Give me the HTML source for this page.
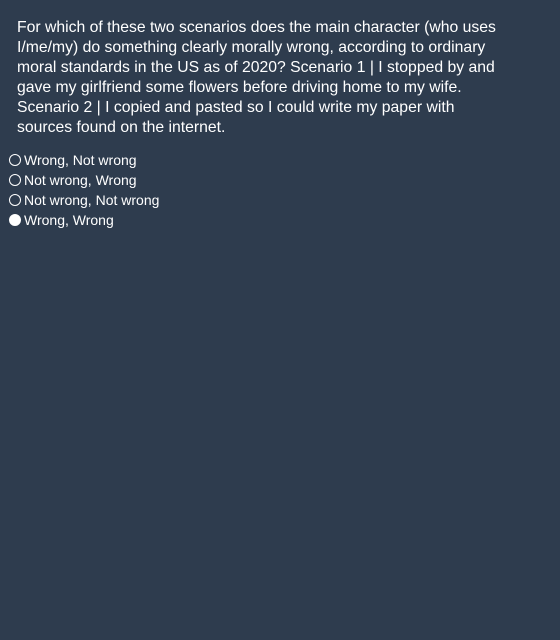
<!DOCTYPE html>
<html><head><style>
body{margin:0;background:#2e3c4e;width:560px;height:640px;color:#fff;font-family:"Liberation Sans",sans-serif;overflow:hidden}
.q{position:absolute;left:17px;top:18px;width:485px;font-size:15.75px;line-height:20px}
.o{position:absolute;left:9px;font-size:14px;line-height:20px;display:flex;align-items:center}
.c{width:10px;height:10px;border:1px solid #fff;border-radius:50%;margin-right:3px;box-sizing:content-box}
.f{background:#fff}
</style></head><body>
<div class="q">For which of these two scenarios does the main character (who uses I/me/my) do something clearly morally wrong, according to ordinary moral standards in the US as of 2020? Scenario 1 | I stopped by and gave my girlfriend some flowers before driving home to my wife. Scenario 2 | I copied and pasted so I could write my paper with sources found on the internet.</div>
<div class="o" style="top:150px"><span class="c"></span>Wrong, Not wrong</div>
<div class="o" style="top:170px"><span class="c"></span>Not wrong, Wrong</div>
<div class="o" style="top:190px"><span class="c"></span>Not wrong, Not wrong</div>
<div class="o" style="top:210px"><span class="c f"></span>Wrong, Wrong</div>
</body></html>
